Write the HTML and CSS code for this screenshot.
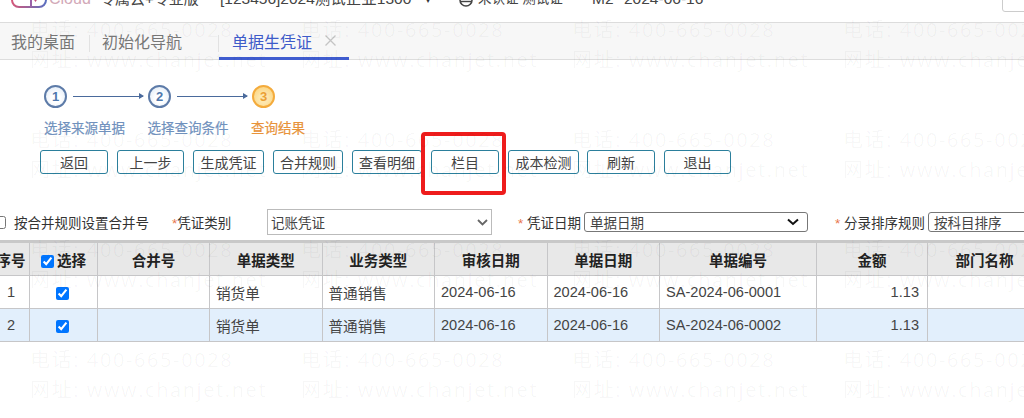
FILE: index.html
```html
<!DOCTYPE html>
<html lang="zh-CN">
<head>
  <meta charset="UTF-8">
  <title>单据生凭证</title>
  <link rel="stylesheet" href="styles.css">
</head>
<body>
<div class="page">
  <header class="topbar">
    <div class="logo">
      <svg class="logo-mark" width="36" height="9" viewBox="0 0 36 9">
        <defs><linearGradient id="logoLine"><stop offset="0" stop-color="#d4587a"/><stop offset="1" stop-color="#5a6fc0"/></linearGradient></defs>
        <rect x="1" y="-12" width="34" height="20" rx="7" fill="none" stroke="url(#logoLine)" stroke-width="2"/>
        <path d="M20 -4v12" stroke="#9a62a8" stroke-width="2"/>
        <path d="M21 -2h7l-3.500 5z" fill="#c0527f"/>
      </svg>
      <span class="logo-text">Cloud</span>
    </div>
    <span class="top-item top-edition">专属云+专业版</span>
    <span class="top-item top-company">[123456]2024测试企业1300</span>
    <span class="top-caret">▾</span>
    <svg class="top-globe" width="14" height="8" viewBox="0 0 14 8"><circle cx="7" cy="0" r="6" fill="none" stroke="#444" stroke-width="1.600"/><path d="M2 1.500h10" stroke="#444" stroke-width="1.400"/></svg>
    <span class="top-item top-user">未认证 测试证</span>
    <span class="top-item top-period">M2</span>
    <span class="top-item top-date">2024-06-16</span>
    <span class="top-box"></span>
  </header>

  <nav class="tabs">
    <a class="tab tab-first">我的桌面</a>
    <a class="tab tab-second">初始化导航</a>
    <a class="tab tab-active">单据生凭证<svg class="tab-close" width="11" height="11" viewBox="0 0 11 11"><path d="M0.500 0.500l10 10M10.500 0.500l-10 10" stroke="#c4c4c4" stroke-width="1.300"/></svg></a>
  </nav>

  <section class="steps">
    <div class="step-icons">
      <span class="step-dot">1</span>
      <span class="step-arrow"></span>
      <span class="step-dot">2</span>
      <span class="step-arrow"></span>
      <span class="step-dot step-dot-now">3</span>
    </div>
    <div class="step-labels">
      <span class="step-label">选择来源单据</span>
      <span class="step-label">选择查询条件</span>
      <span class="step-label step-label-now">查询结果</span>
    </div>
  </section>

  <div class="toolbar">
    <button class="btn btn-a">返回</button>
    <button class="btn btn-b">上一步</button>
    <button class="btn btn-c">生成凭证</button>
    <button class="btn">合并规则</button>
    <button class="btn">查看明细</button>
    <button class="btn btn-a">栏目</button>
    <button class="btn btn-c">成本检测</button>
    <button class="btn btn-a btn-tight">刷新</button>
    <button class="btn btn-b">退出</button>
    <span class="highlight"></span>
  </div>

  <div class="filters">
    <input type="checkbox" class="merge-check">
    <label class="merge-label">按合并规则设置合并号</label>
    <label class="field-label field-type"><i>*</i>凭证类别</label>
    <div class="fake-select select-type">记账凭证<svg width="11" height="7" viewBox="0 0 11 7"><path d="M1 1l4.500 4.500L10 1" fill="none" stroke="#666" stroke-width="1.800"/></svg></div>
    <label class="field-label field-date"><i>*</i> 凭证日期</label>
    <div class="fake-select select-date">单据日期<svg width="12" height="8" viewBox="0 0 12 8"><path d="M1 1.500l5 4.500 5-4.500" fill="none" stroke="#111" stroke-width="2"/></svg></div>
    <label class="field-label field-sort"><i>*</i> 分录排序规则</label>
    <div class="fake-select select-sort">按科目排序</div>
  </div>

  <div class="table-wrap">
    <table class="grid">
      <colgroup>
        <col class="c-no"><col class="c-check"><col class="c-merge"><col class="c-type"><col class="c-type">
        <col class="c-type"><col class="c-type"><col class="c-code"><col class="c-amount"><col class="c-dept">
      </colgroup>
      <thead>
        <tr>
          <th>序号</th>
          <th><input type="checkbox" checked>选择</th>
          <th>合并号</th>
          <th>单据类型</th>
          <th>业务类型</th>
          <th>审核日期</th>
          <th>单据日期</th>
          <th>单据编号</th>
          <th>金额</th>
          <th>部门名称</th>
        </tr>
      </thead>
      <tbody>
        <tr>
          <td class="center">1</td>
          <td class="center pick"><input type="checkbox" checked></td>
          <td></td>
          <td>销货单</td>
          <td>普通销售</td>
          <td>2024-06-16</td>
          <td>2024-06-16</td>
          <td>SA-2024-06-0001</td>
          <td class="right">1.13</td>
          <td></td>
        </tr>
        <tr class="row-on">
          <td class="center">2</td>
          <td class="center pick"><input type="checkbox" checked></td>
          <td></td>
          <td>销货单</td>
          <td>普通销售</td>
          <td>2024-06-16</td>
          <td>2024-06-16</td>
          <td>SA-2024-06-0002</td>
          <td class="right">1.13</td>
          <td></td>
        </tr>
      </tbody>
    </table>
  </div>

  <div class="watermark" aria-hidden="true">
    <div class="mark">电话: 400-665-0028<br>网址: www.chanjet.net</div>
    <div class="mark">电话: 400-665-0028<br>网址: www.chanjet.net</div>
    <div class="mark">电话: 400-665-0028<br>网址: www.chanjet.net</div>
    <div class="mark">电话: 400-665-0028<br>网址: www.chanjet.net</div>
    <div class="mark">电话: 400-665-0028<br>网址: www.chanjet.net</div>
    <div class="mark">电话: 400-665-0028<br>网址: www.chanjet.net</div>
    <div class="mark">电话: 400-665-0028<br>网址: www.chanjet.net</div>
    <div class="mark">电话: 400-665-0028<br>网址: www.chanjet.net</div>
    <div class="mark">电话: 400-665-0028<br>网址: www.chanjet.net</div>
    <div class="mark">电话: 400-665-0028<br>网址: www.chanjet.net</div>
    <div class="mark">电话: 400-665-0028<br>网址: www.chanjet.net</div>
    <div class="mark">电话: 400-665-0028<br>网址: www.chanjet.net</div>
    <div class="mark">电话: 400-665-0028<br>网址: www.chanjet.net</div>
    <div class="mark">电话: 400-665-0028<br>网址: www.chanjet.net</div>
    <div class="mark">电话: 400-665-0028<br>网址: www.chanjet.net</div>
    <div class="mark">电话: 400-665-0028<br>网址: www.chanjet.net</div>
  </div>
</div>
</body>
</html>
```

FILE: styles.css
```css
html, body {
  margin: 0;
  padding: 0;
  background: #fff;
  font-family: "Liberation Sans", "Noto Sans CJK SC", sans-serif;
  font-size: 14px;
  color: #333;
}
.page {
  position: relative;
  width: 1024px;
  height: 418px;
  overflow: hidden;
}
.topbar {
  position: relative;
  display: flex;
  align-items: flex-end;
  height: 22px;
  padding-left: 11px;
  border-bottom: 1px solid #dcdcdc;
  overflow: hidden;
}
.logo {
  display: flex;
  width: 89px;
  flex-shrink: 0;
  margin-bottom: 14px;
}
.logo-mark {
  align-self: flex-end;
}
.logo-text {
  align-self: flex-end;
  margin-left: 2px;
  margin-bottom: 1px;
  font-size: 16px;
  line-height: 16px;
  color: #d2a9b8;
}
.top-item {
  flex-shrink: 0;
  font-size: 15.500px;
  line-height: 20px;
  margin-bottom: 13px;
  white-space: nowrap;
  color: #444;
}
.top-edition { width: 120px; font-size: 15px; }
.top-company { width: 205px; }
.top-caret {
  width: 34px;
  margin-bottom: 13px;
  font-size: 12px;
  line-height: 20px;
}
.top-globe { margin-bottom: 14px; margin-right: 5px; flex-shrink: 0; }
.top-user { width: 114px; font-size: 13.500px; }
.top-period { width: 32px; }
.top-box {
  position: absolute;
  right: -10px;
  bottom: 10px;
  width: 30px;
  height: 30px;
  border: 1px solid #ccc;
  border-radius: 3px;
}
.tabs {
  display: flex;
  align-items: stretch;
  height: 36px;
  background: #f7f7f7;
  border-bottom: 1px solid #ddd;
}
.tab {
  position: relative;
  display: flex;
  align-items: center;
  font-size: 16px;
  color: #777;
  box-sizing: border-box;
}
.tab-first { width: 90px; padding-left: 11px; }
.tab-second { width: 129px; padding-left: 12px; }
.tab-first::after, .tab-second::after {
  content: "";
  position: absolute;
  right: 0;
  top: 12px;
  height: 17px;
  width: 1px;
  background: #e2e2e2;
}
.tab-active {
  width: 130px;
  height: 37px;
  padding: 1px 0 0 13px;
  color: #3e5bc9;
  border-bottom: 3px solid #3f5ccf;
}
.tab-close {
  margin-left: 13px;
}
.steps {
  padding: 24px 0 0 44px;
}
.step-icons {
  display: flex;
  align-items: center;
  height: 24px;
}
.step-dot {
  width: 23px;
  height: 23px;
  box-sizing: border-box;
  border-radius: 50%;
  border: 2px solid #5d7ba8;
  background: radial-gradient(circle at 50% 60%, #fff 30%, #dce8f6 100%);
  color: #4f78ad;
  font-size: 13px;
  font-weight: bold;
  line-height: 19px;
  text-align: center;
}
.step-dot-now {
  border-color: #f4ab3c;
  background: radial-gradient(circle at 50% 60%, #fde7ae 30%, #fbcf72 100%);
  color: #eba035;
}
.step-arrow {
  position: relative;
  width: 70px;
  margin: 0 5px 0 6px;
  height: 1px;
  background: #4a6a9c;
}
.step-arrow::after {
  content: "";
  position: absolute;
  right: -1px;
  top: -3px;
  border-left: 5px solid #4a6a9c;
  border-top: 3.500px solid transparent;
  border-bottom: 3.500px solid transparent;
}
.step-labels {
  display: flex;
  margin-top: 10px;
  height: 21px;
}
.step-label {
  width: 103.500px;
  font-size: 13.500px;
  line-height: 21px;
  color: #7091bd;
  -webkit-text-stroke: 0.200px;
}
.step-label-now { color: #e8933a; }
.toolbar {
  position: relative;
  display: flex;
  gap: 9px;
  margin: 11px 0 0 40px;
  height: 24px;
}
.btn {
  width: 70px;
  height: 24px;
  padding: 0;
  flex-shrink: 0;
  background: #fff;
  border: 1px solid #2b7f9c;
  border-radius: 3px;
  font-family: inherit;
  font-size: 14px;
  color: #444;
}
.btn-a { width: 68px; }
.btn-b { width: 67px; }
.btn-c { width: 71px; }
.btn-tight { margin-left: -1px; }
.highlight {
  position: absolute;
  left: 381px;
  top: -18px;
  width: 85px;
  height: 63px;
  box-sizing: border-box;
  border: 4px solid #ee1c1c;
  border-radius: 4px;
}
.filters {
  display: flex;
  align-items: center;
  height: 26px;
  margin-top: 35px;
  white-space: nowrap;
}
.filters > * { flex-shrink: 0; }
.merge-check {
  width: 13px;
  height: 13px;
  margin: 0 0 0 -7px;
}
.merge-label { margin-left: 8px; width: 158px; font-size: 13.500px; }
.field-label { font-size: 13.500px; }
.field-label i {
  color: #e8744a;
  font-style: normal;
}
.field-type { width: 95px; }
.field-date { width: 66px; margin-left: 26px; }
.field-sort { width: 93px; margin-left: 27px; }
.fake-select {
  display: flex;
  align-items: center;
  justify-content: space-between;
  box-sizing: border-box;
  background: #fff;
  border: 1px solid #bbb;
  color: #444;
  font-size: 13.500px;
}
.select-type { width: 225px; height: 26px; padding: 0 3px; }
.select-date {
  width: 224px;
  height: 20px;
  border-color: #777;
  border-radius: 3px;
  padding: 0 8px 0 5px;
}
.select-sort {
  width: 120px;
  height: 20px;
  border-color: #777;
  border-radius: 3px;
  padding-left: 5px;
}
.table-wrap {
  margin: 5px 0 0 -8px;
  width: 1049px;
}
.grid {
  table-layout: fixed;
  width: 1049px;
  border-collapse: collapse;
  border-top: 3px solid #c8c8c8;
}
.c-no { width: 37px; }
.c-check { width: 68px; }
.c-merge { width: 112px; }
.c-type { width: 112.500px; }
.c-code { width: 157px; }
.c-amount { width: 111px; }
.c-dept { width: 114px; }
.grid th, .grid td {
  border: 1px solid #c6c6c8;
  border-top: 0;
  padding: 0;
  overflow: hidden;
  white-space: nowrap;
}
.grid th {
  height: 32px;
  background: #e8e8e8;
  font-size: 14.500px;
  color: #222;
  text-align: center;
}
.grid th input {
  margin: 0 3px 0 0;
  width: 13px;
  height: 13px;
  vertical-align: -2px;
}
.grid td {
  height: 32px;
  padding: 0 6px;
  font-size: 14.600px;
  color: #444;
  background: #fff;
}
.grid .row-on td { background: #e2effc; }
.grid td input {
  margin: 0;
  width: 13px;
  height: 13px;
  vertical-align: middle;
}
.grid .center { text-align: center; }
.grid .pick { padding-right: 9px; padding-left: 6px; }
.grid .right { text-align: right; padding-right: 8px; }
.watermark {
  position: absolute;
  top: 15px;
  left: 30px;
  right: 0;
  bottom: 0;
  overflow: hidden;
  display: grid;
  grid-template-columns: repeat(4, 271px);
  grid-auto-rows: 110px;
  pointer-events: none;
}
.mark {
  font-family: "Open Sans", "Noto Sans CJK SC", sans-serif;
  font-size: 20px;
  line-height: 30px;
  letter-spacing: 1.600px;
  white-space: nowrap;
  color: rgba(0, 0, 0, 0.04);
}
```
